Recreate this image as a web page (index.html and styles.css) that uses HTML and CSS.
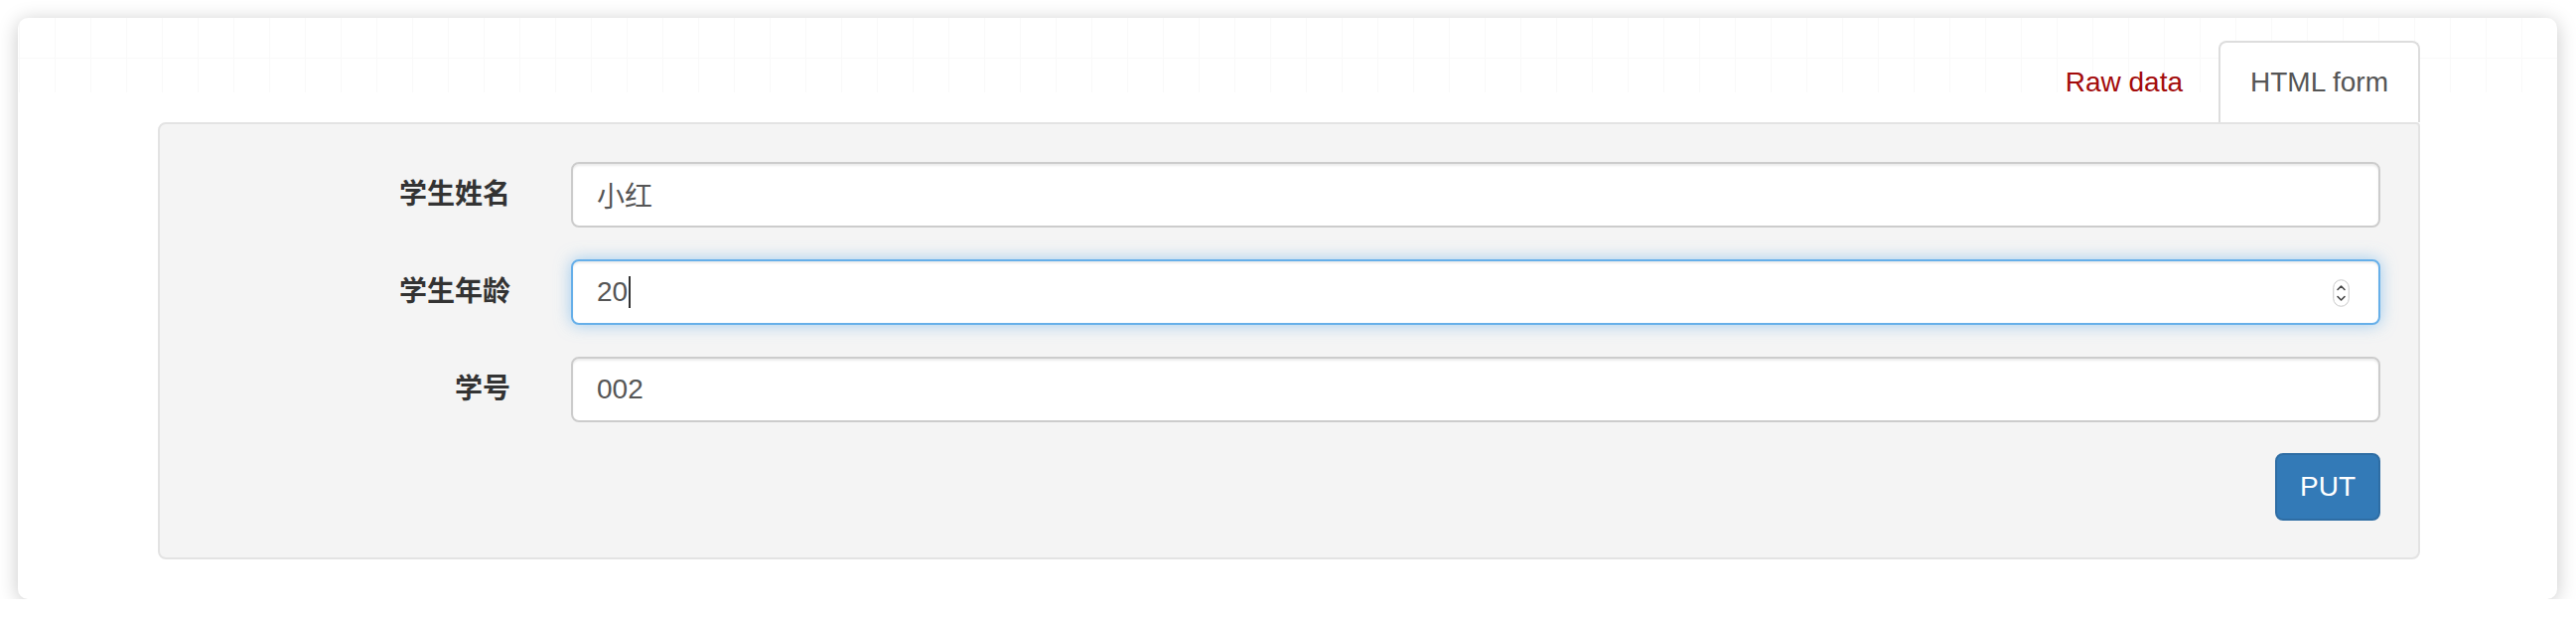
FILE: index.html
```html
<!DOCTYPE html>
<html lang="zh">
<head>
<meta charset="utf-8">
<title>HTML form</title>
<link rel="stylesheet" href="styles.css">
</head>
<body>
<div class="card">
  <ul class="tabs">
    <li class="tab"><a class="tab-link raw">Raw data</a></li>
    <li class="tab active"><a class="tab-link">HTML form</a></li>
  </ul>
  <div class="panel">
    <form class="form">
      <label class="label">学生姓名</label>
      <div class="input"><span class="value cjk">小红</span></div>
      <label class="label">学生年龄</label>
      <div class="input focus">
        <span class="value">20</span><span class="caret"></span>
        <svg class="spin" width="17" height="28" viewBox="0 0 17 28">
          <rect x="0.75" y="0.75" width="15.5" height="26.5" rx="7.75" fill="#fff" stroke="#c8c8c8" stroke-width="1"/>
          <path d="M5 10.5 L8.5 7 L12 10.5" fill="none" stroke="#444" stroke-width="1.6" stroke-linecap="round" stroke-linejoin="round"/>
          <path d="M5 17.5 L8.5 21 L12 17.5" fill="none" stroke="#444" stroke-width="1.6" stroke-linecap="round" stroke-linejoin="round"/>
        </svg>
      </div>
      <label class="label">学号</label>
      <div class="input"><span class="value">002</span></div>
      <div class="actions"><button type="button" class="btn">PUT</button></div>
    </form>
  </div>
</div>
</body>
</html>
```
FILE: styles.css
```css
html, body {
  margin: 0;
  padding: 0;
  background: #ffffff;
}
body {
  padding: 18px 19px 0 18px;
  font-family: "Liberation Sans", "Noto Sans CJK SC", sans-serif;
  font-size: 28px;
  color: #333;
}
.card {
  position: relative;
  box-sizing: border-box;
  height: 585px;
  border-radius: 10px;
  background-color: #fff;
  background-image:
    linear-gradient(to right, #f9f9f9 1px, transparent 1px),
    linear-gradient(#f9f9f9, #f9f9f9);
  background-size: 36px 75px, 100% 1px;
  background-repeat: repeat-x, no-repeat;
  background-position: 37px 0, 0 40px;
  box-shadow: 0 3px 20px rgba(0, 0, 0, 0.22);
  padding: 23px 138px 40px 141px;
}
.tabs {
  list-style: none;
  margin: 0;
  padding: 0;
  display: flex;
  justify-content: flex-end;
  gap: 4px;
}
.tab-link {
  display: block;
  padding: 20px 30px;
  line-height: 40px;
  border: 2px solid transparent;
  border-bottom: 0;
  border-radius: 8px 8px 0 0;
  color: #555;
  text-decoration: none;
}
.tab-link.raw {
  color: #a30b0b;
}
.tab.active .tab-link {
  background: #fff;
  border-color: #dddddd;
  position: relative;
}
.panel {
  background: #f4f4f4;
  border: 2px solid #e3e3e3;
  border-radius: 8px 4px 8px 8px;
  padding: 38px 38px 37px 38px;
}
.form {
  display: grid;
  grid-template-columns: 315px 1fr;
  column-gap: 61px;
  row-gap: 32px;
  align-items: center;
}
.label {
  font-weight: bold;
  text-align: right;
  color: #333;
  line-height: 40px;
}
.input {
  position: relative;
  box-sizing: border-box;
  height: 66px;
  border: 2px solid #cccccc;
  border-radius: 8px;
  background: #fff;
  box-shadow: inset 0 2px 2px rgba(0, 0, 0, 0.075);
  padding: 0 24px;
  display: flex;
  align-items: center;
  color: #555;
}
.input.focus {
  border-color: #66afe9;
  box-shadow: inset 0 2px 2px rgba(0, 0, 0, 0.075), 0 0 16px rgba(102, 175, 233, 0.6);
}
.value {
  line-height: 40px;
}
.cjk {
  font-family: "Noto Sans CJK SC", sans-serif;
  font-weight: 400;
}
.caret {
  display: inline-block;
  width: 2px;
  height: 32px;
  background: #333;
  margin-left: 1px;
}
.spin {
  position: absolute;
  right: 29px;
  top: 18px;
}
.actions {
  grid-column: 1 / -1;
  display: flex;
  justify-content: flex-end;
  margin-top: -1px;
}
.btn {
  box-sizing: border-box;
  height: 68px;
  width: 106px;
  border: 2px solid #2e6da4;
  border-radius: 8px;
  background: #337ab7;
  color: #fff;
  font-family: "Liberation Sans", sans-serif;
  font-size: 28px;
  padding: 0;
}
```
